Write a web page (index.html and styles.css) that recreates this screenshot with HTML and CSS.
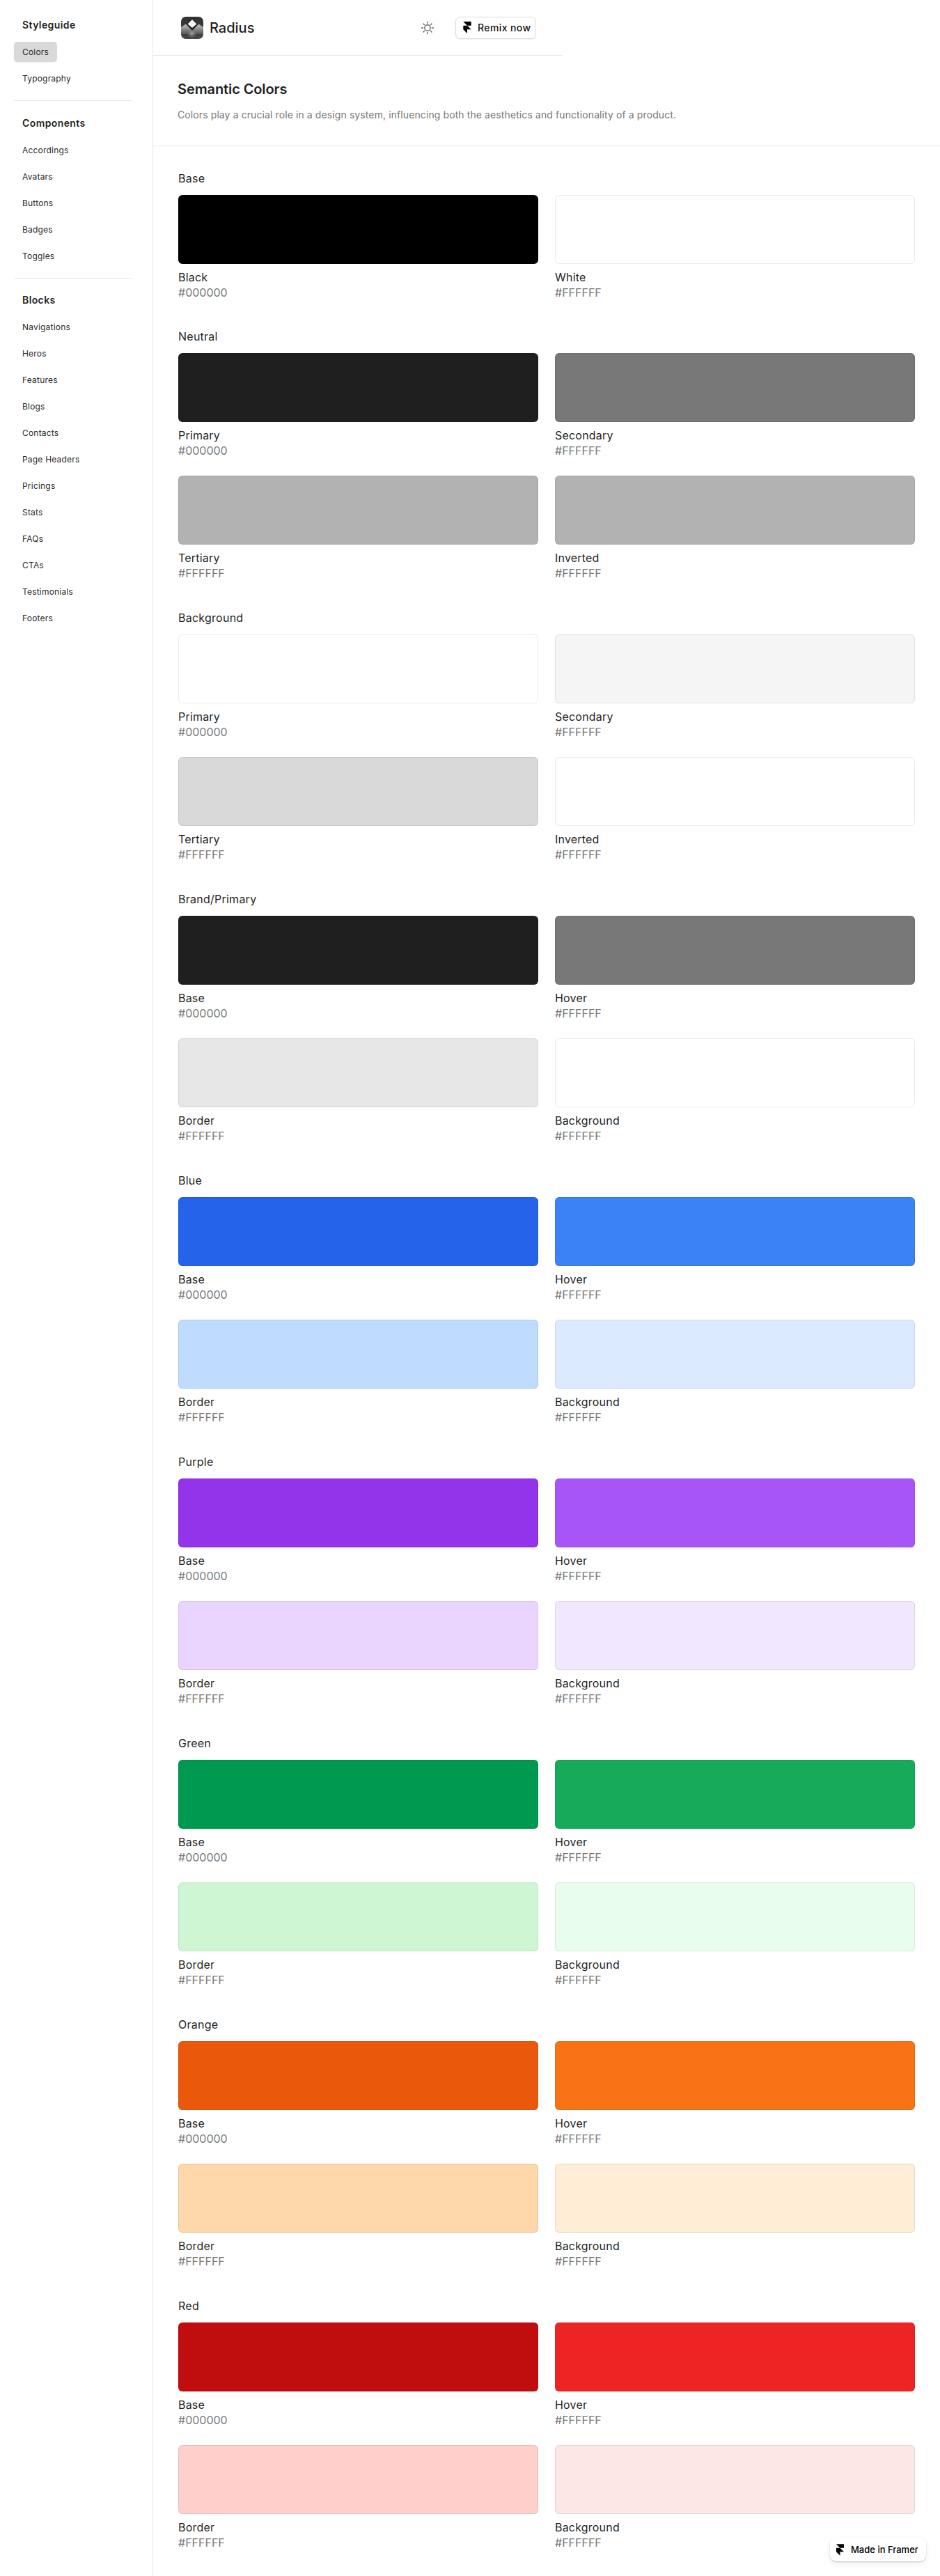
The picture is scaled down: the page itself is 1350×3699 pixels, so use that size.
FILE: index.html
```html
<!DOCTYPE html>
<html lang="en">
<head>
<meta charset="utf-8">
<title>Radius Styleguide</title>
<link rel="stylesheet" href="styles.css">
</head>
<body>
<div class="page">
<aside class="sidebar">
  <nav class="nav-group">
    <h3>Styleguide</h3>
    <a class="active">Colors</a>
    <a>Typography</a>
  </nav>
  <nav class="nav-group">
    <h3>Components</h3>
    <a>Accordings</a><a>Avatars</a><a>Buttons</a><a>Badges</a><a>Toggles</a>
  </nav>
  <nav class="nav-group">
    <h3>Blocks</h3>
    <a>Navigations</a><a>Heros</a><a>Features</a><a>Blogs</a><a>Contacts</a><a>Page Headers</a><a>Pricings</a><a>Stats</a><a>FAQs</a><a>CTAs</a><a>Testimonials</a><a>Footers</a>
  </nav>
</aside>
<main class="main">
  <header class="topbar">
    <div class="brand">
      <svg class="logo" viewBox="0 0 32 32" aria-hidden="true">
        <defs>
          <linearGradient id="lg" x1="0" y1="0" x2="0" y2="1"><stop offset="0" stop-color="#303030"/><stop offset="1" stop-color="#474747"/></linearGradient>
          <linearGradient id="wing" x1="0" y1="0" x2="0" y2="1"><stop offset="0" stop-color="#c4c4c4"/><stop offset="1" stop-color="#555555"/></linearGradient>
          <radialGradient id="glow"><stop offset="0" stop-color="#a8a8a8"/><stop offset="1" stop-color="#6a6a6a" stop-opacity="0"/></radialGradient>
          <clipPath id="lc"><rect width="32" height="32" rx="7"/></clipPath>
        </defs>
        <g clip-path="url(#lc)">
          <rect width="32" height="32" fill="url(#lg)"/>
          <path d="M0 15 7 10.500 16 20 25 10.500 32 15v10H0z" fill="url(#wing)"/>
          <circle cx="15.500" cy="24" r="7.500" fill="url(#glow)"/>
          <path d="M16 2.500 24.500 11 16 19.500 7.500 11z" fill="#1e1e1e"/>
          <path d="M16 4 22.500 10.500 16 16 9.500 10.500z" fill="#f4f4f4"/>
        </g>
      </svg>
      <span class="brand-name">Radius</span>
    </div>
    <svg class="sun" viewBox="0 0 20 20" aria-hidden="true">
      <circle cx="10" cy="10" r="4.200"/>
      <path d="M10 1.500v2M10 16.500v2M1.500 10h2M16.500 10h2M4 4l1.400 1.400M14.600 14.600 16 16M4 16l1.400-1.400M14.600 5.400 16 4"/>
    </svg>
    <a class="remix">
      <svg class="framer" viewBox="0 0 14 21" aria-hidden="true"><path d="M0 0h14v7H7zM0 7h7l7 7H7v7l-7-7z"/></svg>
      <span>Remix now</span>
    </a>
  </header>
  <section class="intro">
    <h1>Semantic Colors</h1>
    <p>Colors play a crucial role in a design system, influencing both the aesthetics and functionality of a product.</p>
  </section>
  <div class="content">
    <section class="group first">
      <h2>Base</h2>
      <div class="grid">
        <figure><div class="sw" style="background:#000000"></div><figcaption><b>Black</b><i>#000000</i></figcaption></figure>
        <figure><div class="sw" style="background:#ffffff"></div><figcaption><b>White</b><i>#FFFFFF</i></figcaption></figure>
      </div>
    </section>
    <section class="group">
      <h2>Neutral</h2>
      <div class="grid">
        <figure><div class="sw" style="background:#1f1f1f"></div><figcaption><b>Primary</b><i>#000000</i></figcaption></figure>
        <figure><div class="sw" style="background:#787878"></div><figcaption><b>Secondary</b><i>#FFFFFF</i></figcaption></figure>
        <figure><div class="sw" style="background:#b2b2b2"></div><figcaption><b>Tertiary</b><i>#FFFFFF</i></figcaption></figure>
        <figure><div class="sw" style="background:#b2b2b2"></div><figcaption><b>Inverted</b><i>#FFFFFF</i></figcaption></figure>
      </div>
    </section>
    <section class="group">
      <h2>Background</h2>
      <div class="grid">
        <figure><div class="sw" style="background:#ffffff"></div><figcaption><b>Primary</b><i>#000000</i></figcaption></figure>
        <figure><div class="sw" style="background:#f5f5f5"></div><figcaption><b>Secondary</b><i>#FFFFFF</i></figcaption></figure>
        <figure><div class="sw" style="background:#d9d9d9"></div><figcaption><b>Tertiary</b><i>#FFFFFF</i></figcaption></figure>
        <figure><div class="sw" style="background:#ffffff"></div><figcaption><b>Inverted</b><i>#FFFFFF</i></figcaption></figure>
      </div>
    </section>
    <section class="group">
      <h2>Brand/Primary</h2>
      <div class="grid">
        <figure><div class="sw" style="background:#1f1f1f"></div><figcaption><b>Base</b><i>#000000</i></figcaption></figure>
        <figure><div class="sw" style="background:#787878"></div><figcaption><b>Hover</b><i>#FFFFFF</i></figcaption></figure>
        <figure><div class="sw" style="background:#e7e7e7"></div><figcaption><b>Border</b><i>#FFFFFF</i></figcaption></figure>
        <figure><div class="sw" style="background:#ffffff"></div><figcaption><b>Background</b><i>#FFFFFF</i></figcaption></figure>
      </div>
    </section>
    <section class="group">
      <h2>Blue</h2>
      <div class="grid">
        <figure><div class="sw" style="background:#2563eb"></div><figcaption><b>Base</b><i>#000000</i></figcaption></figure>
        <figure><div class="sw" style="background:#3b82f6"></div><figcaption><b>Hover</b><i>#FFFFFF</i></figcaption></figure>
        <figure><div class="sw" style="background:#bfdbfe"></div><figcaption><b>Border</b><i>#FFFFFF</i></figcaption></figure>
        <figure><div class="sw" style="background:#dbeafe"></div><figcaption><b>Background</b><i>#FFFFFF</i></figcaption></figure>
      </div>
    </section>
    <section class="group">
      <h2>Purple</h2>
      <div class="grid">
        <figure><div class="sw" style="background:#9333ea"></div><figcaption><b>Base</b><i>#000000</i></figcaption></figure>
        <figure><div class="sw" style="background:#a855f7"></div><figcaption><b>Hover</b><i>#FFFFFF</i></figcaption></figure>
        <figure><div class="sw" style="background:#e9d5ff"></div><figcaption><b>Border</b><i>#FFFFFF</i></figcaption></figure>
        <figure><div class="sw" style="background:#f1e7fe"></div><figcaption><b>Background</b><i>#FFFFFF</i></figcaption></figure>
      </div>
    </section>
    <section class="group">
      <h2>Green</h2>
      <div class="grid">
        <figure><div class="sw" style="background:#009950"></div><figcaption><b>Base</b><i>#000000</i></figcaption></figure>
        <figure><div class="sw" style="background:#15ab5a"></div><figcaption><b>Hover</b><i>#FFFFFF</i></figcaption></figure>
        <figure><div class="sw" style="background:#cff6d3"></div><figcaption><b>Border</b><i>#FFFFFF</i></figcaption></figure>
        <figure><div class="sw" style="background:#e9fdec"></div><figcaption><b>Background</b><i>#FFFFFF</i></figcaption></figure>
      </div>
    </section>
    <section class="group">
      <h2>Orange</h2>
      <div class="grid">
        <figure><div class="sw" style="background:#ea580c"></div><figcaption><b>Base</b><i>#000000</i></figcaption></figure>
        <figure><div class="sw" style="background:#f97316"></div><figcaption><b>Hover</b><i>#FFFFFF</i></figcaption></figure>
        <figure><div class="sw" style="background:#fed7aa"></div><figcaption><b>Border</b><i>#FFFFFF</i></figcaption></figure>
        <figure><div class="sw" style="background:#ffedd5"></div><figcaption><b>Background</b><i>#FFFFFF</i></figcaption></figure>
      </div>
    </section>
    <section class="group">
      <h2>Red</h2>
      <div class="grid">
        <figure><div class="sw" style="background:#c00d0d"></div><figcaption><b>Base</b><i>#000000</i></figcaption></figure>
        <figure><div class="sw" style="background:#ee2424"></div><figcaption><b>Hover</b><i>#FFFFFF</i></figcaption></figure>
        <figure><div class="sw" style="background:#fecfcb"></div><figcaption><b>Border</b><i>#FFFFFF</i></figcaption></figure>
        <figure><div class="sw" style="background:#fce7e6"></div><figcaption><b>Background</b><i>#FFFFFF</i></figcaption></figure>
      </div>
    </section>
  </div>
</main>
</div>
<a class="made">
  <svg class="framer small" viewBox="0 0 14 21" aria-hidden="true"><path d="M0 0h14v7H7zM0 7h7l7 7H7v7l-7-7z"/></svg>
  <span>Made in Framer</span>
</a>
</body>
</html>
```
FILE: styles.css
```css
* { box-sizing: border-box; }
html, body { margin: 0; padding: 0; background: #fff; }
body {
  font-family: Inter, "Liberation Sans", sans-serif;
  color: #1f1f1f;
  height: 3699px;
  overflow: hidden;
  position: relative;
}
.page { display: flex; align-items: stretch; min-height: 3699px; }

.sidebar {
  width: 220px;
  flex: none;
  border-right: 1px solid #e8e8e8;
  padding: 25px 0 0 20px;
}
.nav-group {
  width: 170px;
  display: flex;
  flex-direction: column;
  align-items: flex-start;
  padding-bottom: 8px;
  margin-bottom: 20.5px;
  border-bottom: 1px solid #e8e8e8;
}
.nav-group:last-child { border-bottom: 0; }
.nav-group h3 {
  margin: 0 0 13px;
  padding-left: 12px;
  height: 22px;
  line-height: 22px;
  font-size: 14px;
  font-weight: 600;
  letter-spacing: .4px;
}
.nav-group a {
  height: 29px;
  line-height: 29px;
  padding: 0 12px;
  margin-bottom: 9px;
  font-size: 12px;
  letter-spacing: .2px;
  color: #2a2a2a;
  border-radius: 5px;
}
.nav-group a.active { background: #d9d9d9; box-shadow: 0 1px 2px rgba(0,0,0,.06); }

.main { flex: 1; min-width: 0; }
.topbar {
  width: 588px;
  height: 80px;
  display: flex;
  align-items: center;
  padding: 0 38px 0 40px;
  border-bottom: 1px solid #e8e8e8;
}
.brand { display: flex; align-items: center; gap: 9px; flex: 1; }
.logo { width: 32px; height: 32px; display: block; }
.brand-name { font-size: 20px; font-weight: 500; }
.sun { width: 20px; height: 20px; fill: none; stroke: #666; stroke-width: 1.4; stroke-linecap: round; margin-right: 30px; }
.remix {
  display: flex;
  align-items: center;
  gap: 9px;
  height: 32px;
  width: 116px;
  padding: 0 6px 0 10px;
  border: 1px solid #dcdcdc;
  border-radius: 7px;
  background: #fff;
  box-shadow: 0 1px 2px rgba(0,0,0,.06);
  font-size: 14px;
  font-weight: 500;
  letter-spacing: .4px;
  color: #111;
  white-space: nowrap;
}
.framer { width: 12px; height: 17px; fill: #000; flex: none; }

.intro {
  height: 130px;
  padding: 32px 35px 0;
  border-bottom: 1px solid #e8e8e8;
}
.intro h1 {
  margin: 0;
  font-size: 20px;
  line-height: 32px;
  font-weight: 600;
  letter-spacing: -.1px;
}
.intro p {
  margin: 11px 0 0;
  font-size: 14px;
  line-height: 20px;
  letter-spacing: .1px;
  color: #787878;
}

.content { padding: 34px 36px 0; display: flex; flex-direction: column; gap: 41.5px; }
.group.first { margin-bottom: -1px; }
.group h2 {
  margin: 0 0 11.5px;
  font-size: 16px;
  line-height: 24px;
  font-weight: 400;
  letter-spacing: .25px;
  color: #1f1f1f;
}
.grid { display: grid; grid-template-columns: 1fr 1fr; column-gap: 24px; row-gap: 25px; }
figure { margin: 0; }
.sw {
  height: 99px;
  border: 1px solid rgba(0,0,0,.08);
  border-radius: 6px;
}
figcaption { padding-top: 8px; }
figcaption b, figcaption i {
  display: block;
  font-style: normal;
  font-weight: 400;
  font-size: 16px;
  line-height: 22px;
}
figcaption b { color: #1f1f1f; letter-spacing: .2px; }
figcaption i { color: #787878; }

.made {
  position: absolute;
  left: 1192px;
  top: 3644px;
  width: 138px;
  height: 34px;
  display: flex;
  align-items: center;
  gap: 10px;
  padding: 0 9px;
  background: #fff;
  border-radius: 9px;
  box-shadow: 0 1px 2px rgba(0,0,0,.22), 0 4px 12px rgba(0,0,0,.06);
  font-size: 13px;
  font-weight: 500;
  color: #000;
  white-space: nowrap;
}
.framer.small { width: 11px; height: 17px; }
```
